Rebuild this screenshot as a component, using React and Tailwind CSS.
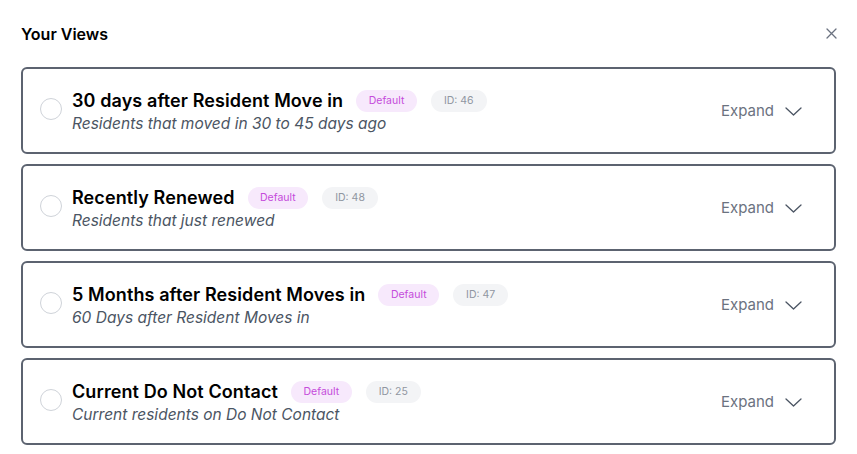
const views = [
  { name: '30 days after Resident Move in', desc: 'Residents that moved in 30 to 45 days ago', id: 46 },
  { name: 'Recently Renewed', desc: 'Residents that just renewed', id: 48 },
  { name: '5 Months after Resident Moves in', desc: '60 Days after Resident Moves in', id: 47 },
  { name: 'Current Do Not Contact', desc: 'Current residents on Do Not Contact', id: 25 },
];

function ViewCard({ view }) {
  return (
    <div className="flex items-center h-[87px] shrink-0 border-2 border-[#5c6370] rounded-md pl-[17px] pr-[32px]">
      <div className="w-[22px] h-[22px] rounded-full border border-[#cfd3d9] mt-[-4px] shrink-0"></div>
      <div className="flex-1 ml-[10px] mt-[2px]">
        <div className="flex items-center">
          <span className="text-[18px] font-semibold text-black leading-[24px] tracking-[0.1px]">{view.name}</span>
          <span className="ml-[13px] h-[22px] px-[12.5px] rounded-full bg-[#f7e9fc] text-[#c54bdb] text-[10.5px] leading-[22px]">Default</span>
          <span className="ml-[14px] h-[22px] px-[13px] rounded-full bg-[#f3f4f6] text-[#9096a1] text-[10.5px] leading-[22px]">ID: {view.id}</span>
        </div>
        <div className="text-[15.5px] italic text-[#4b5563] leading-[22px]">{view.desc}</div>
      </div>
      <button className="flex items-center text-[15px] text-[#6b7280] mt-[2px]">
        Expand
        <svg className="ml-[11px]" width="17" height="9" viewBox="0 0 17 9" fill="none" stroke="#4b5563" strokeWidth="1.3" strokeLinecap="round" strokeLinejoin="round">
          <path d="M1 1l7.5 7 7.5-7" />
        </svg>
      </button>
    </div>
  );
}

export default function App() {
  return (
    <div className="h-[454px] overflow-hidden bg-white px-[21px] font-['Inter',sans-serif]">
      <div className="flex items-center justify-between h-[67px]">
        <h2 className="text-[16px] font-semibold text-black mt-[1px]">Your Views</h2>
        <button className="mr-[-1px] text-[#6b7280]">
          <svg width="11" height="11" viewBox="0 0 11 11" stroke="currentColor" strokeWidth="1.3" strokeLinecap="round">
            <path d="M1 1l9 9M10 1l-9 9" />
          </svg>
        </button>
      </div>
      <div className="flex flex-col gap-[10px]">
        {views.map((v) => (
          <ViewCard key={v.id} view={v} />
        ))}
        <div className="h-[87px] shrink-0 border-2 border-[#5c6370] rounded-md"></div>
      </div>
    </div>
  );
}
